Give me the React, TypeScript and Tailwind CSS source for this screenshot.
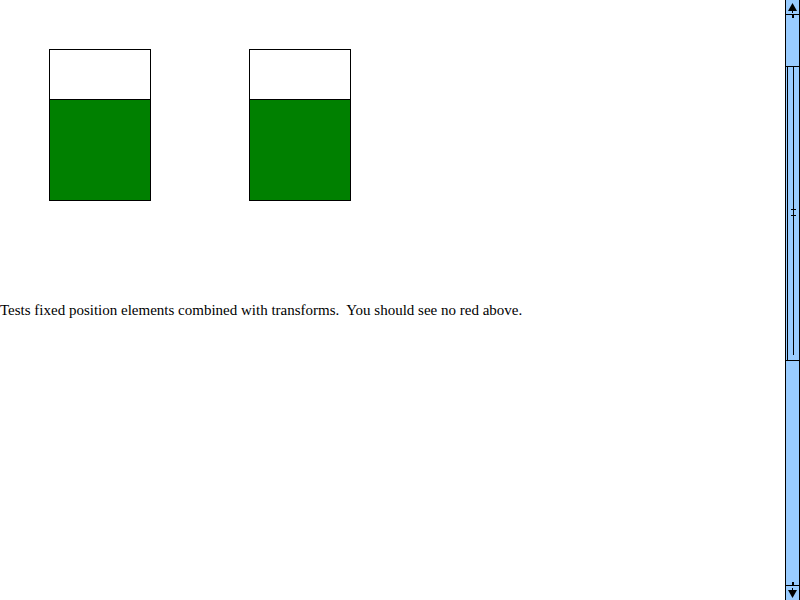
import React from "react";

function Tube() {
    return (
        <div className="w-[102px] h-[152px] border border-black flex flex-col bg-white">
            <div className="h-[49px] shrink-0 bg-white" />
            <div className="h-[101px] shrink-0 border-t border-black bg-[#008000]" />
        </div>
    );
}

function ScrollBar() {
    return (
        <div className="w-[15px] h-[600px] shrink-0 bg-[#99ccff] border-l border-black flex flex-col">
            <div className="h-[15px] shrink-0 border-b border-r border-black flex items-center justify-center">
                <svg width="11" height="11" viewBox="0 0 11 11">
                    <polygon points="5.5,1 10,9 1,9" fill="black" />
                    <rect x="5" y="9" width="1" height="2" fill="black" />
                </svg>
            </div>
            <div className="h-[4px] shrink-0 flex justify-center border-r border-black">
                <div className="w-[2px] h-[3px] bg-black" />
            </div>
            <div className="h-[47px] shrink-0 border-r border-black" />
            <div className="h-[295px] shrink-0 border-t border-b border-r border-black flex">
                <div className="w-[1px] ml-[1px] bg-black" />
                <div className="flex-1 flex justify-center">
                    <div className="w-[1px] h-[288px] bg-black relative">
                        <div className="absolute left-[-2px] top-[142px] w-[5px] h-[7px] flex flex-col justify-between">
                            <div className="h-[1px] bg-black" />
                            <div className="h-[1px] bg-black" />
                        </div>
                    </div>
                </div>
            </div>
            <div className="flex-1 border-r border-black" />
            <div className="h-[4px] shrink-0 flex justify-center items-end border-r border-black">
                <div className="w-[2px] h-[3px] bg-black" />
            </div>
            <div className="h-[15px] shrink-0 border-t border-r border-black flex items-center justify-center">
                <svg width="11" height="11" viewBox="0 0 11 11">
                    <rect x="5" y="0" width="1" height="2" fill="black" />
                    <polygon points="1,2 10,2 5.5,10" fill="black" />
                </svg>
            </div>
        </div>
    );
}

export default function App() {
    return (
        <div className="w-[800px] h-[600px] flex bg-white overflow-hidden">
            <div className="flex-1 flex flex-col">
                <div className="flex gap-[98px] pl-[49px] pt-[49px]">
                    <Tube />
                    <Tube />
                </div>
                <p className="mt-[101px] text-[15px] leading-[17px] text-black font-['Liberation_Serif',serif]">
                    Tests fixed position elements combined with transforms.&nbsp; You should see no red above.
                </p>
            </div>
            <ScrollBar />
        </div>
    );
}
